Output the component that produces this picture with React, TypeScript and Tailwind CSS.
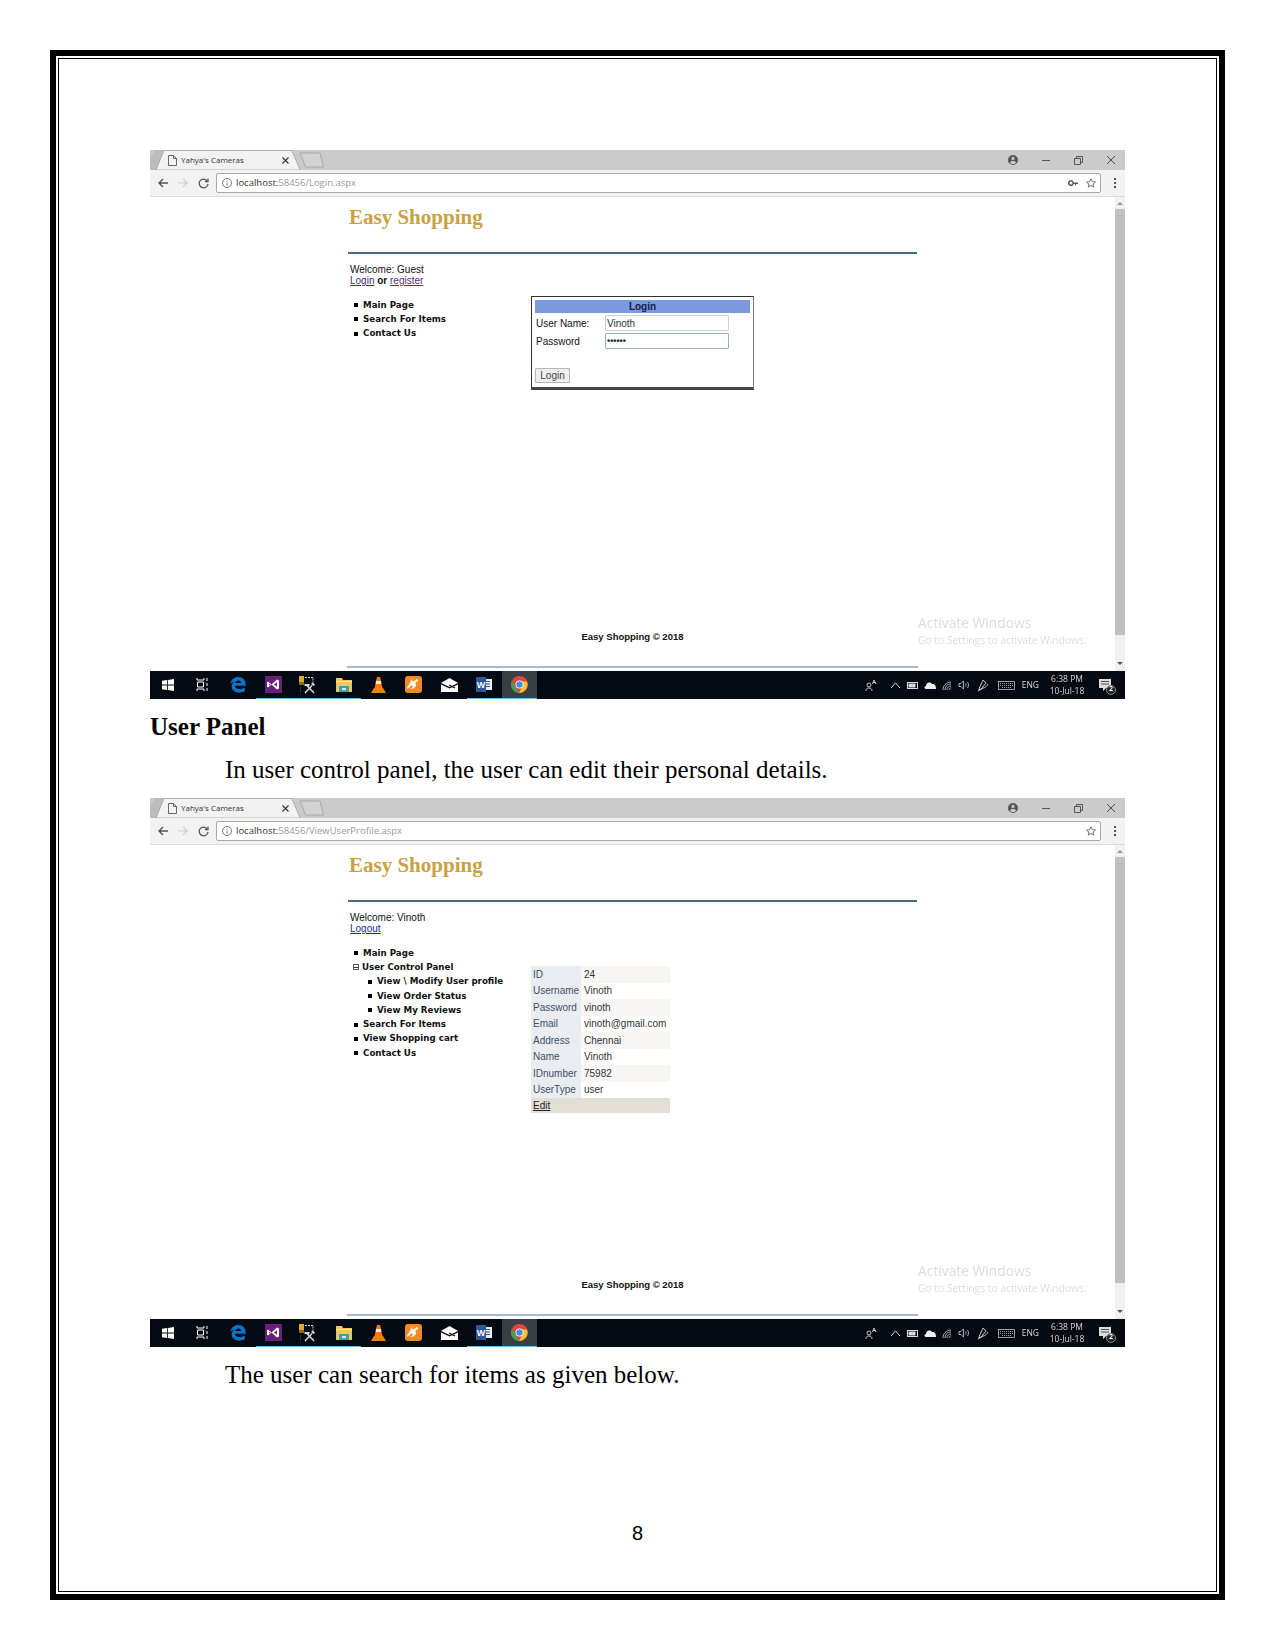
import { ReactNode } from "react";

const stroke = "fill-none stroke-current";

function WinLogo() {
  return (
    <svg width="12" height="12" viewBox="0 0 12 12" fill="#fff">
      <path d="M0 1.800 5 1v4.600H0zM5.800.900 12 0v5.600H5.800zM0 6.400h5V11l-5-.8zM5.800 6.400H12V12l-6.200-.9z" />
    </svg>
  );
}

function TaskView() {
  return (
    <svg width="13" height="13" viewBox="0 0 13 13" className={`${stroke} text-white`} strokeWidth="1">
      <path d="M1 0v2h7V0M1 13v-2h7v2M1.500 4h6v5h-6zM11 0v3M11 5v3M11 10v3" />
    </svg>
  );
}

function EdgeIcon() {
  return (
    <svg width="16" height="16" viewBox="0 0 16 16">
      <path
        d="M.3 7C1 2.500 4.500 0 8.300 0c4.600 0 7.500 3.300 7.500 8.700H5c.2 3.300 4.800 4.600 9.800 1.800v4C9.500 17 1.800 15.500 1.600 9.300c0-2 1-3.600 2.700-4.600C2.600 5 1.200 5.800.3 7zM5 6h6.200c0-3.400-5.400-3.500-6.200 0z"
        fill="#0a72c8"
      />
    </svg>
  );
}

function VsIcon() {
  return (
    <svg width="17" height="17" viewBox="0 0 17 17">
      <rect width="17" height="17" fill="#68217a" />
      <path d="M3 5.500 6.500 8.500 12 3.500l2 1v8l-2 1-5.500-5L3 11.500l-1-.7V6.200zM4 7.300v2.400l1.300-1.200zM12 6.300 9 8.500l3 2.200z" fill="#fff" />
    </svg>
  );
}

function ToolsIcon() {
  return (
    <svg width="18" height="18" viewBox="0 0 18 18">
      <rect x="0" y="0" width="5" height="6" fill="#d9a93a" />
      <rect x="0" y="6" width="5" height="3" fill="#8a6a20" />
      <path d="M6 1.500h8v6" className={stroke} stroke="#666" strokeDasharray="2 1" />
      <path d="M1 12h2M1 15h2" stroke="#777" strokeDasharray="1 1" />
      <path d="M6 17 13 9.500M15 17 8 9.500" stroke="#d8d8d8" strokeWidth="1.500" />
      <path d="M5.500 8h5v2h-5zM12 7.500a2.500 2.500 0 0 1 4 1.500l-2 1z" fill="#d8d8d8" />
    </svg>
  );
}

function FolderIcon() {
  return (
    <svg width="16" height="14" viewBox="0 0 16 14">
      <path d="M0 0h6l1 2h9v12H0z" fill="#f0c75a" />
      <rect y="3" width="16" height="1" fill="#fbe7a8" />
      <rect x="3" y="8" width="10" height="6" fill="#3fa3a8" />
      <rect x="6" y="10" width="4" height="2" fill="#d7eef0" />
    </svg>
  );
}

function VlcIcon() {
  return (
    <svg width="15" height="16" viewBox="0 0 15 16">
      <path d="M6 0h3l1 4H5z" fill="#f47c14" />
      <path d="M5 4h5l.5 3h-6z" fill="#eee" />
      <path d="M4.500 7h6l1 4h-8z" fill="#f47c14" />
      <path d="M3 11h9l3 5H0z" fill="#e8801c" />
    </svg>
  );
}

function UcIcon() {
  return (
    <svg width="17" height="17" viewBox="0 0 17 17">
      <rect width="17" height="17" rx="3" fill="#f08a24" />
      <path d="M2 13c0-3 2-4 3-6 .8-1.500.5-3 2-4-.5 2 1 2.500 2 2l3-2 1.500 1.800-3 2c1 2 .5 5-2.500 6H4.500c1-.5 3-.5 3-2.500 0-1-1-1.200-2 0-1 .9-1.500 2-3.500 2.700z" fill="#fff3df" />
    </svg>
  );
}

function MailIcon() {
  return (
    <svg width="17" height="14" viewBox="0 0 17 14">
      <path d="M8.500 0 17 5 8.500 9 0 5z" fill="#fff" />
      <path d="M0 6.500 8.500 10.500 17 6.500V14H0z" fill="#fff" />
      <path d="M8 7l6 3" stroke="#111" strokeWidth="1.200" />
    </svg>
  );
}

function WordIcon() {
  return (
    <svg width="16" height="15" viewBox="0 0 16 15">
      <rect x="8" y="2" width="8" height="11" fill="#e8eef8" />
      <path d="M10 4.500h4M10 7h4M10 9.500h4" stroke="#2b579a" />
      <rect width="10" height="15" fill="#2b579a" />
      <text x="5" y="11" fontSize="9" fontWeight="700" textAnchor="middle" fill="#fff" fontFamily="Liberation Sans">W</text>
    </svg>
  );
}

function ChromeIcon() {
  return (
    <svg width="17" height="17" viewBox="0 0 17 17">
      <circle cx="8.500" cy="8.500" r="8.500" fill="#e0483a" />
      <path d="M.9 4.800 5 12l3.500 5A8.500 8.500 0 0 1 .9 4.800z" fill="#3fa458" />
      <path d="M8.500 5.500H16A8.500 8.500 0 0 1 8 17l3-6z" fill="#f3c230" />
      <circle cx="8.500" cy="8.500" r="4" fill="#fff" />
      <circle cx="8.500" cy="8.500" r="3.200" fill="#4a8af0" />
    </svg>
  );
}

const taskbarApps: { icon: ReactNode; running?: boolean; active?: boolean }[] = [
  { icon: <WinLogo /> },
  { icon: <TaskView /> },
  { icon: <EdgeIcon /> },
  { icon: <VsIcon />, running: true },
  { icon: <ToolsIcon />, running: true },
  { icon: <FolderIcon />, running: true },
  { icon: <VlcIcon /> },
  { icon: <UcIcon /> },
  { icon: <MailIcon /> },
  { icon: <WordIcon />, running: true },
  { icon: <ChromeIcon />, running: true, active: true },
];

function Taskbar() {
  return (
    <div className="flex h-[28px] items-stretch bg-[#050a12] text-[#d8d8d8]">
      {taskbarApps.map((app, i) => (
        <div
          key={i}
          className={`flex w-[35.200px] items-center justify-center border-b ${app.running ? "border-[#76b9ed]" : "border-transparent"} ${app.active ? "bg-[#3a3f45]" : ""}`}
        >
          {app.icon}
        </div>
      ))}
      <div className="flex-1" />
      <div className="flex items-center pr-[14px] font-['Open_Sans',sans-serif]">
        <svg width="12" height="12" viewBox="0 0 12 12" className={stroke} strokeWidth="0.900">
          <circle cx="4" cy="6" r="2" />
          <path d="M1 12c0-2 1-3 3-3s3 1 3 3" />
          <path d="M7.500 5 9 1l2 4M8 3.500h2.500" />
        </svg>
        <svg className={`ml-[13px] ${stroke}`} width="11" height="7" viewBox="0 0 11 7" strokeWidth="1">
          <path d="M1 6l4.500-5L10 6" />
        </svg>
        <svg className={`ml-[6px] ${stroke}`} width="11" height="7" viewBox="0 0 11 7">
          <rect x=".5" y=".5" width="10" height="6" />
          <rect x="2" y="2" width="6" height="3" fill="currentColor" />
        </svg>
        <svg className="ml-[6px]" width="12" height="8" viewBox="0 0 12 8" fill="#eee">
          <path d="M2 8C0 8 0 5 2 5c0-3 4-5 6-2 3-.5 4 2 4 5z" />
        </svg>
        <svg className={`ml-[6px] ${stroke}`} width="10" height="9" viewBox="0 0 10 9" strokeWidth="0.800">
          <path d="M1 9c0-4 3-8 8-8M3 9c0-3 2-6 6-6M5 9c0-2 1-4 4-4M7 9c0-1 1-2 2-2" />
        </svg>
        <svg className={`ml-[6px] ${stroke}`} width="12" height="10" viewBox="0 0 12 10" strokeWidth="0.800">
          <path d="M1 3.500h2L5.500 1v8L3 6.500H1zM7.500 3.500c.7 1 .7 2 0 3M9.500 2c1.300 2 1.300 4 0 6" />
        </svg>
        <svg className={`ml-[7px] ${stroke}`} width="12" height="13" viewBox="0 0 12 13" strokeWidth="0.900">
          <path d="M6 1l3 3-5 6-2 1 .3-2zM1 12c1.500-1.500 3-1 5-3 2 0 4-2 5-4" />
        </svg>
        <svg className={`ml-[9px] ${stroke}`} width="17" height="9" viewBox="0 0 17 9" strokeWidth="0.700">
          <rect x=".5" y=".5" width="16" height="8" />
          <path d="M2 2.500h13M2 4.500h13M4 6.500h9" strokeDasharray="1 1" />
        </svg>
        <span className="ml-[7px] text-[8.500px]">ENG</span>
        <div className="ml-[11px] flex w-[34px] flex-col items-center text-[8.500px] leading-[12px]">
          <span className="whitespace-nowrap">6:38 PM</span>
          <span className="whitespace-nowrap">10-Jul-18</span>
        </div>
        <div className="relative ml-[15px] h-[13px] w-[12px]">
          <svg width="12" height="13" viewBox="0 0 12 13">
            <path d="M0 0h12v9H7l-3 3V9H0z" fill="#dcdcdc" />
            <path d="M2 2.500h8M2 5h8" stroke="#333" strokeWidth="0.800" />
          </svg>
          <span className="absolute bottom-[-3px] right-[-5px] flex h-[10px] w-[10px] items-center justify-center rounded-full border border-[#888] bg-[#222] text-[7px] font-bold text-white">2</span>
        </div>
      </div>
    </div>
  );
}

function TabStrip() {
  return (
    <div className="flex h-[20px] bg-[#cbcbcb]">
      <div className="relative h-[20px] w-[175px] shrink-0">
        <svg className="absolute inset-0" width="175" height="20" viewBox="0 0 175 20">
          <path d="M0 20V8L5 0h9L6 20z" fill="#bcbcbc" />
          <path d="M6 20 14 .5h128l8 19.500z" fill="#f2f2f2" stroke="#9a9a9a" strokeWidth="0.700" />
          <path d="M150 3h20l3.500 14h-18z" fill="#d2d2d2" stroke="#9a9a9a" strokeWidth="0.700" />
        </svg>
        <svg className={`absolute left-[18px] top-[5px] text-[#444] ${stroke}`} width="9" height="11" viewBox="0 0 9 11" strokeWidth="0.800">
          <path d="M.5.500h5l3 3v7h-8zM5.500.500v3h3" />
        </svg>
        <span className="absolute left-[31px] top-[4px] font-['Open_Sans',sans-serif] text-[8px] leading-[12px] text-[#333]">Yahya&apos;s Cameras</span>
        <svg className={`absolute left-[132px] top-[7px] text-[#333] ${stroke}`} width="7" height="7" viewBox="0 0 7 7" strokeWidth="1.100">
          <path d="M.5.500l6 6M6.500.500l-6 6" />
        </svg>
      </div>
      <div className="flex-1" />
      <div className="flex w-[122px] items-center text-[#555]">
        <svg width="10" height="10" viewBox="0 0 10 10" className="ml-[5px]" fill="currentColor">
          <path d="M5 0a5 5 0 1 0 0 10A5 5 0 0 0 5 0zm0 1.800a1.600 1.600 0 1 1 0 3.200 1.600 1.600 0 0 1 0-3.200zM2 7.500C2.500 6.300 3.700 6 5 6s2.500.3 3 1.500C7.300 8.500 6.200 9 5 9s-2.300-.5-3-1.500z" />
        </svg>
        <svg width="8" height="1" className="ml-[24px]"><rect width="8" height="1" fill="currentColor" /></svg>
        <svg className={`ml-[24px] ${stroke}`} width="9" height="9" viewBox="0 0 9 9">
          <path d="M.5 2.500h6v6h-6zM2.500 2.500v-2h6v6h-2" />
        </svg>
        <svg className={`ml-[24px] ${stroke}`} width="8" height="8" viewBox="0 0 8 8">
          <path d="M0 0l8 8M8 0 0 8" />
        </svg>
      </div>
    </div>
  );
}

function Toolbar({ path, showKey }: { path: string; showKey?: boolean }) {
  return (
    <div className="flex h-[27px] items-center border-b border-[#dadada] bg-[#f2f2f2]">
      <svg className={`ml-[8px] text-[#555] ${stroke}`} width="10" height="10" viewBox="0 0 10 10" strokeWidth="1.400">
        <path d="M10 5H1M5 1 1 5l4 4" />
      </svg>
      <svg className={`ml-[10px] text-[#cfcfcf] ${stroke}`} width="10" height="10" viewBox="0 0 10 10" strokeWidth="1.200">
        <path d="M0 5h9M5 1l4 4-4 4" />
      </svg>
      <svg className={`ml-[10px] text-[#555] ${stroke}`} width="11" height="11" viewBox="0 0 11 11" strokeWidth="1.300">
        <path d="M9.300 3A4.400 4.400 0 1 0 10 6" />
        <path d="M10 .5v3H7" />
      </svg>
      <div className="ml-[7px] flex h-[20px] w-[885px] items-center rounded-[2px] border border-[#a9a9a9] bg-white">
        <svg className={`ml-[5px] text-[#555] ${stroke}`} width="10" height="10" viewBox="0 0 10 10" strokeWidth="0.800">
          <circle cx="5" cy="5" r="4.500" />
          <path d="M5 4.500v3M5 2.500v1" />
        </svg>
        <span className="ml-[4px] font-['Open_Sans',sans-serif] text-[9.500px] leading-none text-[#333]">
          localhost:<span className="text-[#9a9a9a]">{path}</span>
        </span>
        <div className="flex-1" />
        {showKey && (
          <svg className="mr-[8px] text-[#555]" width="10" height="6" viewBox="0 0 10 6" fill="currentColor">
            <path d="M3 0a3 3 0 1 0 2.800 4H7v1.500h1V4h2V2.500H5.800A3 3 0 0 0 3 0zm0 1.500a1.500 1.500 0 1 1 0 3 1.500 1.500 0 0 1 0-3z" />
          </svg>
        )}
        <svg className={`mr-[4px] text-[#555] ${stroke}`} width="10" height="10" viewBox="0 0 10 10" strokeWidth="0.800">
          <path d="M5 .8 6.300 3.700l3.200.3-2.400 2 .7 3.100L5 7.500 2.200 9.100 2.900 6 .5 4l3.200-.3z" />
        </svg>
      </div>
      <svg className="ml-[13px] text-[#555]" width="2" height="10" viewBox="0 0 2 10" fill="currentColor">
        <rect y="0" width="2" height="2" />
        <rect y="4" width="2" height="2" />
        <rect y="8" width="2" height="2" />
      </svg>
    </div>
  );
}

function Bullet({ children, indent }: { children: ReactNode; indent?: boolean }) {
  return (
    <li className={`flex h-[14.300px] items-center ${indent ? "pl-[20px]" : "pl-[6px]"}`}>
      <span className="mr-[5px] h-[4px] w-[4px] shrink-0 bg-black" />
      {children}
    </li>
  );
}

function LoginBox() {
  return (
    <div className="flex h-[94px] w-[223px] flex-col border border-b-[3px] border-[#333] border-b-[#444] border-r-[#777] px-[3px] pt-[3px]">
      <div className="flex h-[13px] items-center justify-center bg-[#7c98de] text-[10px] font-bold text-[#102050]">Login</div>
      <div className="mt-[2px] flex h-[16px] items-center">
        <span className="w-[70px] pl-[1px] text-[#111]">User Name:</span>
        <div className="flex h-[16px] w-[124px] items-center rounded-[1px] border border-[#cfcfd8] pl-[1px] text-[#333]">Vinoth</div>
      </div>
      <div className="mt-[2px] flex h-[16px] items-center">
        <span className="w-[70px] pl-[1px] text-[#111]">Password</span>
        <div className="flex h-[16px] w-[124px] items-center rounded-[1px] border border-[#8fb4c4] pl-[1px] text-[9px] font-bold leading-none text-[#222]">••••••</div>
      </div>
      <div className="mt-[19px] flex h-[15px] w-[35px] items-center justify-center rounded-[1px] border border-[#b5b5b5] bg-[#eeeeee] text-[#444]">Login</div>
    </div>
  );
}

const profile = [
  ["ID", "24"],
  ["Username", "Vinoth"],
  ["Password", "vinoth"],
  ["Email", "vinoth@gmail.com"],
  ["Address", "Chennai"],
  ["Name", "Vinoth"],
  ["IDnumber", "75982"],
  ["UserType", "user"],
];

function ProfileTable() {
  return (
    <div className="mt-[22px] w-[139px] font-['Liberation_Sans',sans-serif] text-[10px] text-[#333]">
      {profile.map(([label, value], i) => (
        <div key={label} className={`flex h-[16.500px] items-center ${i % 2 === 0 ? "bg-[#f7f6f3]" : "bg-white"}`}>
          <div className="flex h-full w-[50px] items-center bg-[#e9ecf1] pl-[2px] text-[#3f4f68]">{label}</div>
          <div className="pl-[3px]">{value}</div>
        </div>
      ))}
      <div className="flex h-[15px] items-center bg-[#e2ded6] pl-[2px] text-[#222] underline">Edit</div>
    </div>
  );
}

function BrowserWindow(props: {
  path: string;
  showKey?: boolean;
  user: string;
  links: ReactNode;
  nav: ReactNode;
  children: ReactNode;
}) {
  return (
    <div className="h-[549px] w-[975px] blur-[0.3px]">
      <TabStrip />
      <Toolbar path={props.path} showKey={props.showKey} />
      <div className="relative flex h-[474px] bg-white">
        <div className="ml-[198px] flex h-full w-[571px] flex-col">
          <div className="h-[55px] pl-[1px] pt-[8px] font-['Liberation_Serif',serif] text-[21px] font-bold leading-[24px] text-[#c9a13f]">Easy Shopping</div>
          <div className="h-[2px] w-[569px] bg-[#4a6a80]" />
          <div className="mt-[10px] pl-[2px] font-['Liberation_Sans',sans-serif] text-[10px] leading-[11px] text-[#111]">
            <div>{props.user}</div>
            <div>{props.links}</div>
          </div>
          <div className="mt-[10px] flex">
            <ul className="w-[183px] shrink-0 pt-[2px] font-['DejaVu_Sans',sans-serif] text-[8.700px] font-bold text-[#111]">{props.nav}</ul>
            <div className="font-['Liberation_Sans',sans-serif] text-[10px]">{props.children}</div>
          </div>
          <div className="mt-auto flex h-[35px] w-[569px] flex-col items-center justify-start">
            <span className="font-['Liberation_Sans',sans-serif] text-[9.500px] font-bold leading-[12px] text-[#111]">Easy Shopping © 2018</span>
          </div>
          <div className="mb-[3px] ml-[-1px] h-[2px] w-[571px] bg-[#a9b8d4]" />
        </div>
        <div className="absolute left-[768px] top-[417px] font-['Open_Sans',sans-serif] text-[#dcdcdc]">
          <div className="text-[13.800px] leading-[18px]">Activate Windows</div>
          <div className="mt-[1px] text-[10.300px] leading-[14px]">Go to Settings to activate Windows.</div>
        </div>
        <div className="ml-auto flex h-full w-[10px] flex-col bg-[#f1f1f1]">
          <div className="flex h-[12px] items-center justify-center">
            <span className="border-x-[3px] border-b-[3px] border-x-transparent border-b-[#999]" />
          </div>
          <div className="h-[426px] bg-[#c0c0c0]" />
          <div className="flex flex-1 items-end justify-center pb-[6px]">
            <span className="border-x-[3px] border-t-[3px] border-x-transparent border-t-[#555]" />
          </div>
        </div>
      </div>
      <Taskbar />
    </div>
  );
}

export default function App() {
  return (
    <div className="h-[1650px] w-[1275px] bg-white pl-[50px] pt-[50px]">
      <div className="h-[1550px] w-[1175px] border-[6px] border-black p-[2px]">
        <div className="h-full border border-black pl-[91px] pt-[91px] font-['Liberation_Serif',serif] text-black">
          <BrowserWindow
            path="58456/Login.aspx"
            showKey
            user="Welcome: Guest"
            links={<><span className="text-[#3c2a8c] underline">Login</span> <span className="font-bold">or</span> <span className="text-[#5a2a8c] underline">register</span></>}
            nav={
              <>
                <Bullet>Main Page</Bullet>
                <Bullet>Search For Items</Bullet>
                <Bullet>Contact Us</Bullet>
              </>
            }
          >
            <LoginBox />
          </BrowserWindow>

          <h2 className="mt-[14px] text-[25px] font-bold leading-[28px]">User Panel</h2>
          <p className="mt-[15px] pl-[75px] text-[25px] leading-[28px]">In user control panel, the user can edit their personal details.</p>

          <div className="mt-[14px]">
            <BrowserWindow
              path="58456/ViewUserProfile.aspx"
              user="Welcome: Vinoth"
              links={<span className="text-[#1a2a9c] underline">Logout</span>}
              nav={
                <>
                  <Bullet>Main Page</Bullet>
                  <li className="flex h-[14.300px] items-center pl-[5px]">
                    <span className="mr-[3px] flex h-[6px] w-[6px] items-center justify-center border border-[#555]">
                      <span className="h-px w-[4px] bg-[#333]" />
                    </span>
                    User Control Panel
                  </li>
                  <Bullet indent>View \ Modify User profile</Bullet>
                  <Bullet indent>View Order Status</Bullet>
                  <Bullet indent>View My Reviews</Bullet>
                  <Bullet>Search For Items</Bullet>
                  <Bullet>View Shopping cart</Bullet>
                  <Bullet>Contact Us</Bullet>
                </>
              }
            >
              <ProfileTable />
            </BrowserWindow>
          </div>

          <p className="mt-[14px] pl-[75px] text-[25px] leading-[28px]">The user can search for items as given below.</p>
          <div className="ml-[-91px] mt-[132px] w-[1157px] text-center font-['Liberation_Sans',sans-serif] text-[20px] leading-[24px]">8</div>
        </div>
      </div>
    </div>
  );
}
